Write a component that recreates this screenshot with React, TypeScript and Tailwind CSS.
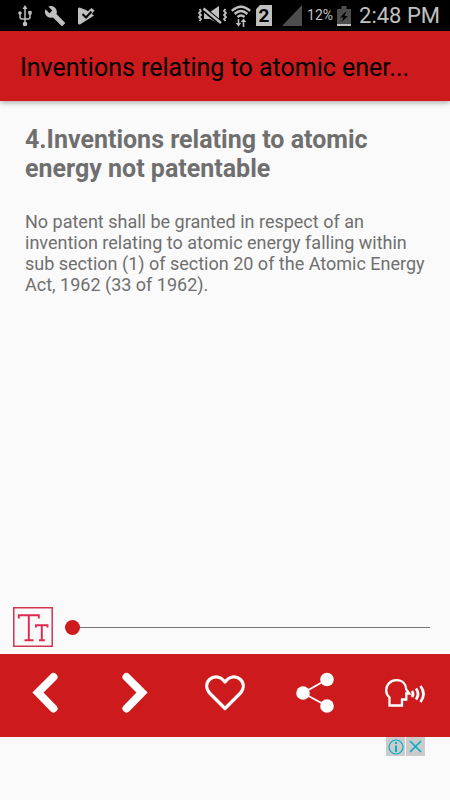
import React, { useState } from "react";

const TITLE = "4.Inventions relating to atomic energy not patentable";
const BODY =
  "No patent shall be granted in respect of an invention relating to atomic energy falling within sub section (1) of section 20 of the Atomic Energy Act, 1962 (33 of 1962).";

function StatusBar() {
  return (
    <div className="flex h-[31px] shrink-0 items-center justify-between bg-black pl-[18px] pr-[10px] text-[#c0c0c0]">
      <div className="flex items-center gap-3">
        {/* usb */}
        <svg className="h-[22px] w-[14px]" viewBox="0 0 14 22" fill="none" stroke="currentColor" strokeWidth="1.5">
          <path d="M7 2v17M2 9v3q0 2 2 2h6q2 0 2-2V9" />
          <path d="M7 0l2.5 4h-5z" fill="currentColor" stroke="none" />
          <circle cx="2" cy="8" r="1.8" fill="currentColor" stroke="none" />
          <path d="M10.3 6h3.4v3.5h-3.4z" fill="currentColor" stroke="none" />
          <circle cx="7" cy="19" r="2.3" fill="currentColor" stroke="none" />
        </svg>
        {/* wrench */}
        <svg className="h-[22px] w-[22px]" viewBox="0 0 24 24" fill="currentColor">
          <path d="M22.7 19l-9.1-9.1c.9-2.3.4-5-1.5-6.9-2-2-5-2.4-7.4-1.3L9 6 6 9 1.6 4.7C.4 7.1.9 10.1 2.9 12.1c1.9 1.9 4.6 2.4 6.9 1.5l9.1 9.1c.4.4 1 .4 1.4 0l2.3-2.3c.5-.4.5-1.1.1-1.4z" />
        </svg>
        {/* play triangle with a tick */}
        <svg className="h-[18px] w-[17px]" viewBox="0 0 17 18">
          <path d="M1.5.5L8 3l8 5.5L2 17.5Q0 18 0 16V2Q0 0 1.5.5z" fill="currentColor" />
          <path d="M13.500 1l3 2.500-4 5-4-3z" fill="currentColor" />
          <path d="M4.500 7l3.500 3.500L13.500 4.500" fill="none" stroke="#000" strokeWidth="2" />
        </svg>
      </div>
      <div className="flex items-center">
        {/* vibrate, muted */}
        <svg className="mr-1 h-[19px] w-[29px]" viewBox="0 0 29 19" fill="none" stroke="currentColor">
          <path d="M1.5 3l1.5 2-2 2 2 2-2 2 2 2-1.5 2M27.5 3L26 5l2 2-2 2 2 2-2 2 1.5 2" strokeWidth="1.8" />
          <path d="M6 6h6l9-6v18l-9-5H6z" fill="currentColor" stroke="none" />
          <path d="M5 2.500l18 15" stroke="#000" strokeWidth="5" />
          <path d="M5.500 2.500l17.500 14.500" strokeWidth="2.400" />
        </svg>
        {/* wifi with transfer arrows */}
        <svg className="mr-[5px] h-[22px] w-[20px]" viewBox="0 0 20 22" fill="none" stroke="currentColor" strokeWidth="2.4">
          <path d="M.8 5.8Q10-2.5 19.2 5.8M3.6 9Q10 3 16.4 9M6.5 12Q10 8.8 13.5 12" />
          <path d="M7.5 14v5M12.5 17v5" strokeWidth="1.6" />
          <path d="M4.7 18h5.6l-2.8 3.5zM9.7 17h5.6l-2.8-3.5z" fill="currentColor" stroke="none" />
        </svg>
        {/* sim card */}
        <div className="mr-[10px] flex h-[21px] w-4 items-center justify-center bg-[#c0c0c0] text-[19px] leading-none font-bold text-black [clip-path:polygon(25%_0,100%_0,100%_100%,0_100%,0_20%)]">
          2
        </div>
        <svg className="mr-[5px] h-[21px] w-[20px]" viewBox="0 0 20 21">
          <path d="M20 0v21H0z" fill="#4d4d4d" />
        </svg>
        <span className="mr-1 text-[14px]">12%</span>
        {/* battery, charging */}
        <svg className="mr-2 h-[20px] w-[14px]" viewBox="0 0 14 20">
          <path d="M4.5 0h5v3H14v15H0V3h4.5z" fill="#4d4d4d" />
          <path d="M0 18h14v2H0z" fill="#c0c0c0" />
          <path d="M9.5 5L3 11.5h3.5L4.5 16l6.5-6H7.5z" fill="#000" />
        </svg>
        <span className="text-[22px] leading-[31px]">2:48 PM</span>
      </div>
    </div>
  );
}

function TextSizeIcon() {
  return (
    <svg className="h-10 w-10 shrink-0" viewBox="0 0 40 40" fill="none" stroke="#e0284f">
      <path d="M.8.8h38.4v38.4H.8z" stroke="#d63350" strokeWidth="1.5" />
      <path d="M5.8 11.5V8.2h20v3.3M15.8 8.2v25M11.5 33.2h9" strokeWidth="1.9" />
      <path d="M23 20.5v-2.3h11.5v2.3M28.8 18.2v15M26 33.2h5.8" strokeWidth="1.9" />
    </svg>
  );
}

function ActionBar({ liked, onLike }: { liked: boolean; onLike: () => void }) {
  const button = "flex flex-1 cursor-pointer items-center justify-center";
  return (
    <nav className="flex h-[83px] shrink-0 pb-1.5 bg-[#cc1a1d] text-white">
      <button type="button" aria-label="Previous" className={button}>
        <svg className="h-[42px] w-[26px]" viewBox="0 0 26 42" fill="none" stroke="currentColor" strokeWidth="8" strokeLinecap="round">
          <path d="M21.5 5L6 20.5l15.5 16" />
        </svg>
      </button>
      <button type="button" aria-label="Next" className={button}>
        <svg className="h-[42px] w-[26px]" viewBox="0 0 26 42" fill="none" stroke="currentColor" strokeWidth="8" strokeLinecap="round">
          <path d="M4.5 5L20 20.5l-15.5 16" />
        </svg>
      </button>
      <button type="button" aria-label="Favourite" aria-pressed={liked} onClick={() => onLike()} className={button}>
        <svg className="h-[36px] w-[40px]" viewBox="0 0 40 36" fill={liked ? "currentColor" : "none"} stroke="currentColor" strokeWidth="3.2" strokeLinejoin="round">
          <path d="M20 33.5L5 18.5C.5 13.5 1 8 4.5 4.5C9 .5 15.5 1 20 7C24.5 1 31 .5 35.5 4.5C39 8 39.5 13.5 35 18.5z" />
        </svg>
      </button>
      <button type="button" aria-label="Share" className={button}>
        <svg className="h-[42px] w-[38px]" viewBox="0 0 38 42" fill="currentColor">
          <path d="M31 7.5L7 21l24 13" fill="none" stroke="currentColor" strokeWidth="1.8" />
          <circle cx="31" cy="7.5" r="6.8" />
          <circle cx="7" cy="21" r="6.8" />
          <circle cx="31" cy="34" r="6.8" />
        </svg>
      </button>
      <button type="button" aria-label="Read aloud" className={button}>
        <svg className="h-[28px] w-[40px]" viewBox="0 0 40 28" fill="none" stroke="currentColor" strokeWidth="2.3">
          <path d="M4.5 26.5v-8C2.5 16.5 1.2 14.5 1.2 11.5C1.2 5.5 5.5 1.2 11.5 1.2C17.5 1.2 21 5 21.3 10.500l3 4h-3v6h-4.300v6z" />
          <path d="M27 12q2 3 0 6M31 9.5q4 5.500 0 11M35.500 7q6 8 0 16" strokeWidth="2.8" />
        </svg>
      </button>
    </nav>
  );
}

function AdSlot() {
  return (
    <div className="flex h-[63px] shrink-0 items-start justify-end gap-px bg-[#fafafa] pr-[25px] text-[#00aecd]">
      <button type="button" aria-label="Ad information" className="flex h-[19px] w-[19px] items-center justify-center bg-[#cbcbcb]">
        <svg className="h-[16px] w-[16px]" viewBox="0 0 16 16" fill="none" stroke="currentColor">
          <circle cx="8" cy="8" r="7" strokeWidth="1.2" />
          <path d="M8 3v2M8 6.5V13" strokeWidth="2" />
        </svg>
      </button>
      <button type="button" aria-label="Close ad" className="flex h-[19px] w-[19px] items-center justify-center bg-[#cbcbcb]">
        <svg className="h-[13px] w-[13px]" viewBox="0 0 13 13" fill="none" stroke="currentColor" strokeWidth="1.6">
          <path d="M1 1l11 11M12 1L1 12" />
        </svg>
      </button>
    </div>
  );
}

export default function App() {
  const [size, setSize] = useState(0);
  const [liked, setLiked] = useState(false);

  return (
    <div className="flex min-h-screen flex-col bg-[#fafafa] font-['Roboto',sans-serif]">
      <StatusBar />
      <header className="flex h-[70px] shrink-0 items-center bg-[#cc1a1d] px-5 pt-1 shadow-[0_1px_6px_rgba(0,0,0,0.4)]">
        <h1 className="truncate text-[25px] text-black">Inventions relating to atomic ener...</h1>
      </header>

      <main className="flex-1 px-[25px] pt-6 text-[#6f6f6f]">
        <h2 className="text-[25px] leading-[29px] font-bold">{TITLE}</h2>
        <p className="mt-7 leading-[21px]" style={{ fontSize: 18 + size }}>
          {BODY}
        </p>
      </main>

      <div className="flex shrink-0 items-center gap-3 pb-[7px] pl-[13px] pr-5">
        <TextSizeIcon />
        <input
          type="range"
          aria-label="Text size"
          min={0}
          max={12}
          value={size}
          onChange={(e) => setSize(Number(e.target.value))}
          className="h-[15px] min-w-0 flex-1 cursor-pointer appearance-none bg-transparent [&::-webkit-slider-runnable-track]:h-px [&::-webkit-slider-runnable-track]:bg-[#757575] [&::-webkit-slider-thumb]:-mt-[7px] [&::-webkit-slider-thumb]:h-[15px] [&::-webkit-slider-thumb]:w-[15px] [&::-webkit-slider-thumb]:appearance-none [&::-webkit-slider-thumb]:rounded-full [&::-webkit-slider-thumb]:bg-[#cc1a1d]"
        />
      </div>
      <ActionBar liked={liked} onLike={() => setLiked(!liked)} />
      <AdSlot />
    </div>
  );
}
